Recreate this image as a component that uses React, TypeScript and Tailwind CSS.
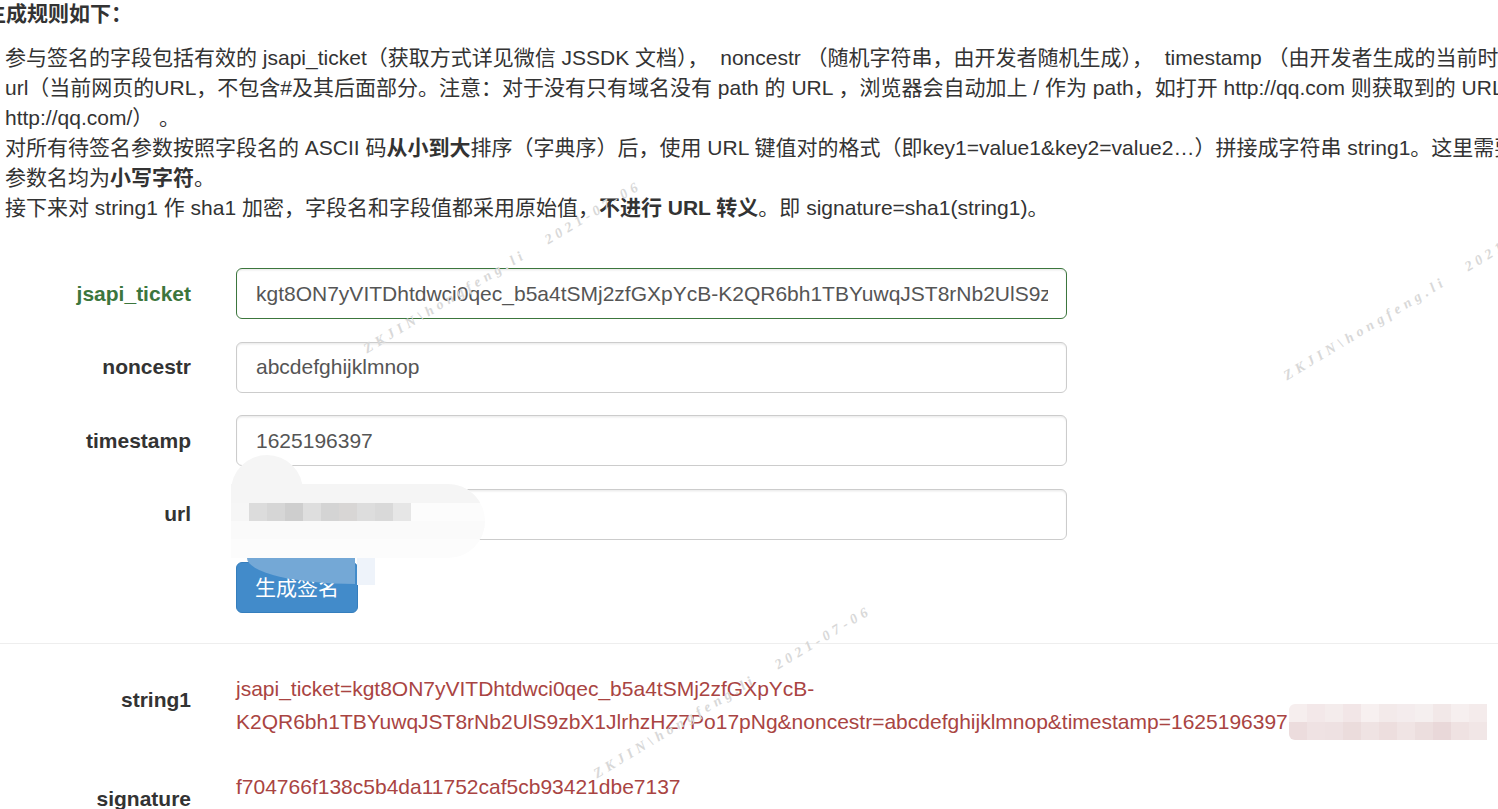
const font = {
  fontFamily: '"Liberation Sans", Arial, "Noto Sans CJK SC", sans-serif',
};

function Watermark({ left, top, text }: { left: number; top: number; text: string }) {
  return (
    <span
      className="pointer-events-none absolute origin-left -rotate-[31deg] whitespace-pre text-[14px] font-bold tracking-[4.5px] text-[#d8d8d8]"
      style={{ left, top, fontFamily: '"Liberation Serif", serif', fontStyle: "italic" }}
    >
      {text}
    </span>
  );
}

function Field({
  label,
  value,
  ok,
}: {
  label: string;
  value: string;
  ok?: boolean;
}) {
  return (
    <div className="flex items-start">
      <label
        className={`w-[191px] shrink-0 pt-[10.5px] text-right font-bold leading-[30px] ${
          ok ? "text-[#3c763d]" : "text-[#333]"
        }`}
      >
        {label}
      </label>
      <input
        readOnly
        value={value}
        className={`ml-[45px] h-[51px] w-[831px] rounded-[6px] border bg-white pl-[19px] pr-[18px] text-[21px] text-[#555] shadow-[inset_0_1.5px_1.5px_rgba(0,0,0,0.075)] outline-none ${
          ok ? "border-[#3c763d]" : "border-[#ccc]"
        }`}
        style={font}
      />
    </div>
  );
}

const urlBlocks = ["#dcdcdc", "#d6d6d6", "#cecece", "#dedede", "#d4d4d4", "#d8d6d5", "#dddddd", "#d9d9d9", "#e6e6e6"];
const pinkTop = ["#f6eeee", "#f3e8e9", "#f4ecec", "#f2e6e7", "#f7f0f0", "#f3eaea", "#f4eced", "#f5efef", "#f2e8e8", "#f6efef", "#f4ebeb"];
const pinkBottom = ["#ecdcdd", "#efe2e3", "#eee1e2", "#ebdcdc", "#efe3e3", "#eddede", "#f0e4e4", "#ecdede", "#e9d8d9", "#efe2e2", "#f1e6e6"];

export default function App() {
  return (
    <div
      className="relative h-[809px] w-[1498px] overflow-hidden bg-white text-[21px] leading-[30px] text-[#333]"
      style={font}
    >
      {/* rules */}
      <div className="pl-[5px]">
        <h4 className="-mt-px -ml-[20px] font-bold">生成规则如下：</h4>
        <div className="mt-[14px] whitespace-pre">
          <div>
            参与签名的字段包括有效的 jsapi_ticket（获取方式详见微信 JSSDK 文档），  noncestr （随机字符串，由开发者随机生成），  timestamp （由开发者生成的当前时间戳），
          </div>
          <div>
            url（当前网页的URL，不包含#及其后面部分。注意：对于没有只有域名没有 path 的 URL ，浏览器会自动加上 / 作为 path，如打开 http://qq.com 则获取到的 URL 为
          </div>
          <div>http://qq.com/） 。</div>
          <div>
            对所有待签名参数按照字段名的 ASCII 码<b>从小到大</b>排序（字典序）后，使用 URL 键值对的格式（即key1=value1&amp;key2=value2…）拼接成字符串 string1。这里需要注意的是所有
          </div>
          <div>
            参数名均为<b>小写字符</b>。
          </div>
          <div>
            接下来对 string1 作 sha1 加密，字段名和字段值都采用原始值，<b>不进行 URL 转义</b>。即 signature=sha1(string1)。
          </div>
        </div>
      </div>

      {/* form */}
      <form className="mt-[45px] flex flex-col gap-[22.5px]">
        <Field
          ok
          label="jsapi_ticket"
          value="kgt8ON7yVITDhtdwci0qec_b5a4tSMj2zfGXpYcB-K2QR6bh1TBYuwqJST8rNb2UlS9zbX1JlrhzHZ7Po17pNg"
        />
        <Field label="noncestr" value="abcdefghijklmnop" />
        <Field label="timestamp" value="1625196397" />
        <Field label="url" value="" />
        <div className="pl-[236px]">
          <button
            type="button"
            className="h-[51px] w-[122px] rounded-[6px] border border-[#357ebd] bg-[#428bca] text-[21px] text-white"
            style={font}
          >
            生成签名
          </button>
        </div>
      </form>

      <hr className="mt-[30px] border-t border-[#eee]" />

      {/* result */}
      <div className="mt-[30px] flex items-start">
        <div className="w-[191px] shrink-0 pt-[10.5px] text-right font-bold">string1</div>
        <div className="ml-[45px] whitespace-nowrap text-[#a94442]">
          <div>jsapi_ticket=kgt8ON7yVITDhtdwci0qec_b5a4tSMj2zfGXpYcB-</div>
          <div className="flex items-center">
            K2QR6bh1TBYuwqJST8rNb2UlS9zbX1JlrhzHZ7Po17pNg&amp;noncestr=abcdefghijklmnop&amp;timestamp=1625196397
            <div className="ml-px flex flex-col overflow-hidden rounded-l-[6px]">
              <div className="flex">
                {pinkTop.map((c, i) => (
                  <div key={i} className="h-[18px] w-[18px]" style={{ background: c }} />
                ))}
              </div>
              <div className="flex">
                {pinkBottom.map((c, i) => (
                  <div key={i} className="h-[18px] w-[18px]" style={{ background: c }} />
                ))}
              </div>
            </div>
          </div>
        </div>
      </div>

      <div className="mt-[32px] flex items-start">
        <div className="w-[191px] shrink-0 pt-[12px] text-right font-bold">signature</div>
        <div className="ml-[45px] text-[#a94442]">f704766f138c5b4da11752caf5cb93421dbe7137</div>
      </div>

      {/* redaction over url field */}
      <div className="pointer-events-none absolute left-[231px] top-[455px] h-[40px] w-[72px] rounded-t-[36px] bg-[#f5f5f5]" />
      <div className="pointer-events-none absolute left-[231px] top-[484px] flex h-[74px] w-[254px] flex-col overflow-hidden rounded-r-[40px] bg-[#fcfcfc]">
        <div className="h-[19px] bg-[#f5f5f5]" />
        <div className="flex h-[18px]">
          <div className="w-[18px] bg-[#f6f6f6]" />
          {urlBlocks.map((c, i) => (
            <div key={i} className="w-[18px]" style={{ background: c }} />
          ))}
        </div>
        <div className="h-[18px] bg-[#fafafa]" />
      </div>
      <div className="pointer-events-none absolute left-[247px] top-[558px] h-[26px] w-[108px] rounded-bl-[100%] bg-[#74a8d6]" />
      <div className="pointer-events-none absolute left-[357px] top-[558px] h-[27px] w-[18px] bg-[#eef3fa]" />

      {/* watermarks */}
      <Watermark left={365} top={335} text={"ZKJIN\\hongfeng.li   2021-07-06"} />
      <Watermark left={1285} top={362} text={"ZKJIN\\hongfeng.li   2021-07-06"} />
      <Watermark left={595} top={760} text={"ZKJIN\\hongfeng.li   2021-07-06"} />
    </div>
  );
}
